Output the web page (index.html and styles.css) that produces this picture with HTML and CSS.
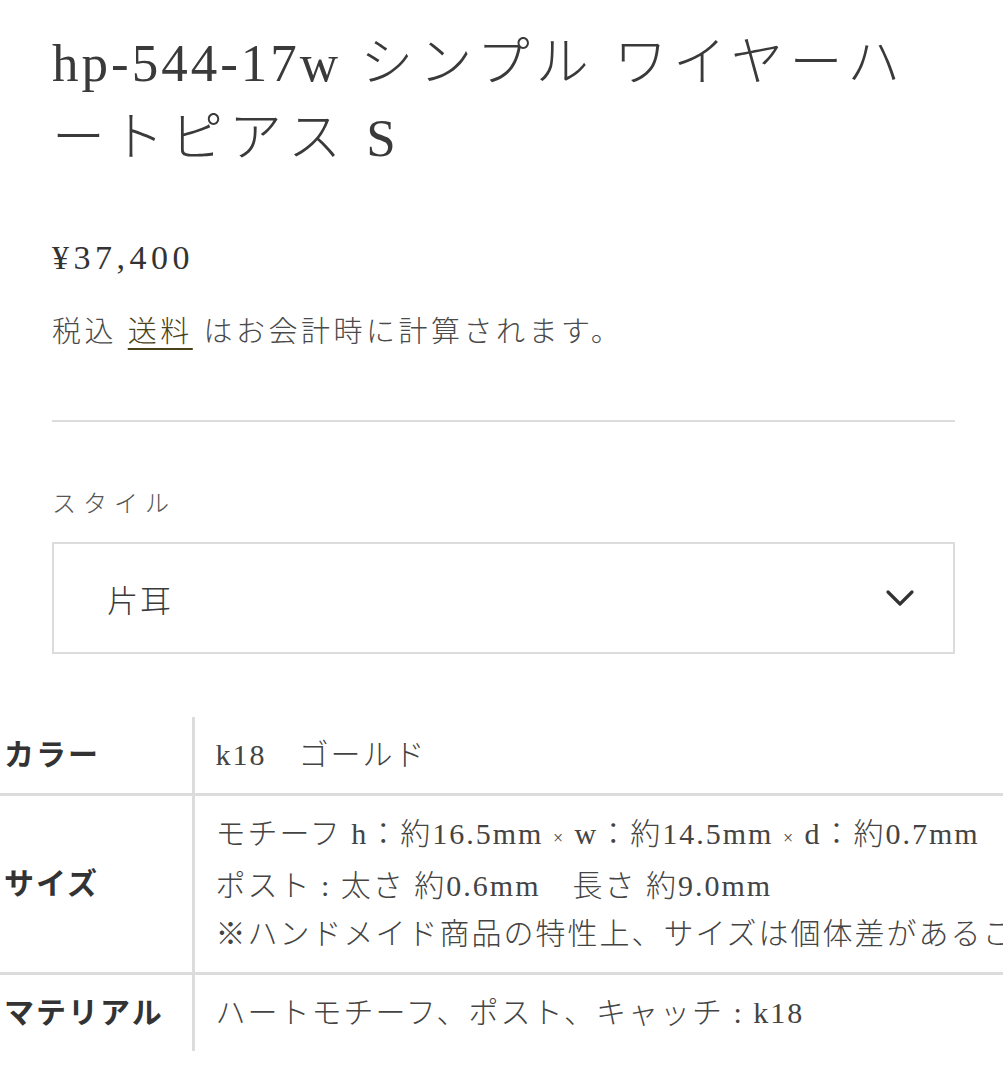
FILE: index.html
```html
<!DOCTYPE html>
<html lang="ja">
<head>
    <meta charset="UTF-8">
    <meta name="viewport" content="width=device-width, initial-scale=1.0">
    <title>hp-544-17w シンプル ワイヤーハートピアス S</title>
    <link rel="stylesheet" href="styles.css">
</head>
<body>
    <main class="product">
        <section class="product-info">
            <h1 class="product-title"><span class="sku">hp-544-17w</span> シンプル ワイヤーハートピアス S</h1>
            <p class="price">¥37,400</p>
            <p class="tax-note">税込 <a href="#" class="shipping-link">送料</a> はお会計時に計算されます。</p>
            <hr class="divider">

            <div class="variant">
                <label class="variant-label" for="style-select">スタイル</label>
                <div class="select">
                    <span class="select-value">片耳</span>
                    <svg class="select-icon" width="30" height="18" viewBox="0 0 30 18" aria-hidden="true">
                        <path d="M3 3 L15 15 L27 3" fill="none" stroke="#333" stroke-width="3.2" stroke-linecap="round" stroke-linejoin="round"/>
                    </svg>
                </div>
            </div>
        </section>

        <table class="spec-table">
            <colgroup>
                <col class="col-head">
                <col>
            </colgroup>
            <tr>
                <th>カラー</th>
                <td>k18　ゴールド</td>
            </tr>
            <tr>
                <th>サイズ</th>
                <td>
                    モチーフ h：約16.5mm <small>×</small> w：約14.5mm <small>×</small> d：約0.7mm<br>
                    ポスト : 太さ 約0.6mm　長さ 約9.0mm<br>
                    ※ハンドメイド商品の特性上、サイズは個体差があることがございます。
                </td>
            </tr>
            <tr>
                <th>マテリアル</th>
                <td>ハートモチーフ、ポスト、キャッチ : k18</td>
            </tr>
        </table>
    </main>
</body>
</html>
```

FILE: styles.css
```css
/* General Styles */
* {
    margin: 0;
    padding: 0;
    box-sizing: border-box;
}

html, body {
    overflow-x: hidden;
}

body {
    font-family: "Liberation Serif", "Noto Sans CJK JP", serif;
    font-weight: 300;
    background: #fff;
    color: #3e3e3e;
    width: 1003px;
}

.product-info {
    padding: 26px 48px 0 52px;
}

.product-title {
    font-size: 53px;
    font-weight: 300;
    line-height: 75px;
    letter-spacing: 6px;
    color: #3a3a3a;
    margin-right: 20px;
}

.product-title .sku {
    letter-spacing: 3px;
}

.price {
    margin-top: 62px;
    font-size: 34px;
    letter-spacing: 4.5px;
    line-height: 40px;
    color: #333;
}

.tax-note {
    margin-top: 32px;
    font-size: 29px;
    letter-spacing: 3.5px;
    line-height: 44px;
    color: #4a4a4a;
}

.shipping-link {
    color: #4a4218;
    text-decoration: underline;
    text-underline-offset: 6px;
    text-decoration-thickness: 2px;
}

.divider {
    border: none;
    border-top: 2px solid #dcdcdc;
    margin-top: 66px;
}

/* Variant picker */
.variant {
    margin-top: 64px;
}

.variant-label {
    display: block;
    font-size: 24px;
    letter-spacing: 7px;
    line-height: 36px;
    color: #555;
}

.select {
    margin-top: 20px;
    height: 112px;
    border: 2px solid #dcdcdc;
    display: flex;
    align-items: center;
    justify-content: space-between;
    padding: 0 38px 0 53px;
}

.select-value {
    font-size: 31px;
    letter-spacing: 2px;
    color: #3a3a3a;
}

/* Spec table */
.spec-table {
    margin-top: 63px;
    width: 1400px;
    table-layout: fixed;
    border-collapse: collapse;
    white-space: nowrap;
    font-size: 30px;
    color: #444;
}

.col-head {
    width: 193px;
}

.spec-table th,
.spec-table td {
    padding: 14px 0 14px 21px;
    line-height: 48px;
    text-align: left;
    vertical-align: middle;
}

.spec-table th {
    padding-left: 4px;
    font-weight: 700;
    letter-spacing: 2px;
    color: #333;
    border-right: 3px solid #dcdcdc;
}

.spec-table td {
    letter-spacing: 2px;
}

.spec-table tr + tr th,
.spec-table tr + tr td {
    border-top: 3px solid #dcdcdc;
}

.spec-table small {
    font-size: 18px;
}
```
